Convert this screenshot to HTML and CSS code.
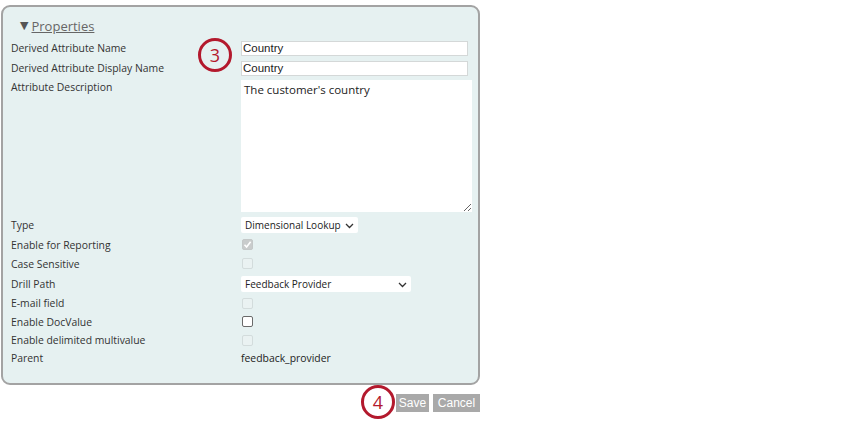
FILE: index.html
```html
<!DOCTYPE html>
<html>
<head>
<meta charset="utf-8">
<link rel="stylesheet" href="styles.css">
</head>
<body>
<div class="page">
  <div class="panel">
    <div class="header"><span class="tri">&#9660;</span><span class="title">Properties</span></div>
    <div class="row r20"><div class="label">Derived Attribute Name</div><div class="val"><input class="text" type="text" value="Country"></div></div>
    <div class="row r20"><div class="label">Derived Attribute Display Name</div><div class="val"><input class="text" type="text" value="Country"></div></div>
    <div class="row rdesc"><div class="label">Attribute Description</div><div class="val"><textarea class="desc">The customer's country</textarea></div></div>
    <div class="row rtype"><div class="label">Type</div><div class="val"><div class="sel sel-type"><span>Dimensional Lookup</span><svg class="chev" width="9" height="6" viewBox="0 0 9 6"><path d="M1 1 L4.5 4.5 L8 1" fill="none" stroke="#333" stroke-width="1.3"/></svg></div></div></div>
    <div class="row rcb1"><div class="label">Enable for Reporting</div><div class="val"><span class="cb dis checked"><svg width="9" height="9" viewBox="0 0 9 9"><path d="M1.5 4.8 L3.6 7 L7.6 1.8" fill="none" stroke="#fff" stroke-width="1.6"/></svg></span></div></div>
    <div class="row rcb2"><div class="label">Case Sensitive</div><div class="val"><span class="cb dis"></span></div></div>
    <div class="row rdrill"><div class="label">Drill Path</div><div class="val"><div class="sel sel-drill"><span>Feedback Provider</span><svg class="chev" width="9" height="6" viewBox="0 0 9 6"><path d="M1 1 L4.5 4.5 L8 1" fill="none" stroke="#333" stroke-width="1.3"/></svg></div></div></div>
    <div class="row rcb3"><div class="label">E-mail field</div><div class="val"><span class="cb dis"></span></div></div>
    <div class="row rcb4"><div class="label">Enable DocValue</div><div class="val"><span class="cb en"></span></div></div>
    <div class="row rcb5"><div class="label">Enable delimited multivalue</div><div class="val"><span class="cb dis"></span></div></div>
    <div class="row rparent"><div class="label">Parent</div><div class="val"><span class="plain">feedback_provider</span></div></div>
  </div>
  <div class="buttons">
    <span class="btn btn-save">Save</span>
    <span class="btn btn-cancel">Cancel</span>
  </div>
  <div class="marker m3">3</div>
  <div class="marker m4">4</div>
</div>
</body>
</html>
```
FILE: styles.css
```css
html, body {
  margin: 0;
  padding: 0;
  background: #ffffff;
}
body {
  font-family: "Open Sans", "DejaVu Sans", sans-serif;
  color: #333;
}
.page {
  position: relative;
  width: 850px;
  height: 425px;
  padding-top: 5px;
  padding-left: 1px;
  box-sizing: border-box;
}
.panel {
  width: 479px;
  height: 380px;
  box-sizing: border-box;
  border: 2px solid #a3a3a3;
  border-radius: 9px;
  background: #e6f1f1;
  padding: 8px 0 0 8px;
}
.header {
  height: 21px;
  display: flex;
  align-items: center;
  padding-left: 9px;
  color: #666;
}
.tri {
  font-size: 11px;
  margin-right: 3px;
  color: #555;
  font-family: "DejaVu Sans", sans-serif;
}
.title {
  font-size: 13px;
  text-decoration: underline;
  color: #666;
}
.row {
  display: flex;
  align-items: center;
  font-size: 10.4px;
}
.label {
  width: 230px;
  flex: none;
  color: #333;
}
.val {
  display: flex;
  align-items: center;
}
.r20 { height: 20px; }
.header + .row { margin-top: 2px; }
.rdesc { height: 136px; align-items: flex-start; padding-top: 2px; box-sizing: border-box; }
.rtype { height: 21px; }
.rcb1 { height: 19px; }
.rcb2 { height: 19px; }
.rdrill { height: 21px; }
.rcb3 { height: 18px; }
.rcb4 { height: 19px; }
.rcb5 { height: 18px; }
.rparent { height: 18px; }

.text {
  width: 227px;
  height: 15px;
  box-sizing: border-box;
  border: 1px solid #d4d8d8;
  background: #fff;
  font-family: "Liberation Sans", Arial, sans-serif;
  font-size: 11.5px;
  font-weight: normal;
  padding: 0 1px;
  color: #222;
  outline: none;
  margin: 0;
}
.desc {
  width: 231px;
  height: 132px;
  box-sizing: border-box;
  border: none;
  background: #fff;
  font-family: "Open Sans", sans-serif;
  font-size: 11.5px;
  color: #222;
  padding: 2px 3px;
  margin: 0;
  resize: both;
  outline: none;
}
.sel {
  position: relative;
  display: flex;
  align-items: center;
  height: 16px;
  background: #fff;
  border-radius: 2px;
  box-sizing: border-box;
  padding-left: 4px;
  font-size: 10px;
  color: #222;
}
.sel-type { width: 117px; }
.sel-drill { width: 170px; }
.chev {
  position: absolute;
  right: 4px;
  top: 6px;
}
.cb {
  display: inline-block;
  width: 11px;
  height: 11px;
  box-sizing: border-box;
  border-radius: 2px;
  margin-left: 1px;
  position: relative;
}
.cb.dis {
  border: 1px solid #d3dcdc;
  background: #eaf2f2;
}
.cb.checked {
  background: #c9cccc;
  border-color: #c4c8c8;
}
.cb.checked svg {
  position: absolute;
  left: 0;
  top: 0;
}
.cb.en {
  border: 1px solid #6a6a6a;
  background: #fff;
}
.plain {
  margin-left: 0;
  color: #222;
}
.buttons {
  width: 479px;
  display: flex;
  justify-content: flex-end;
  gap: 4px;
  margin-top: 9px;
}
.btn {
  display: inline-flex;
  align-items: center;
  justify-content: center;
  height: 18px;
  background: #a9a9a9;
  color: #fff;
  font-family: "Liberation Sans", Arial, sans-serif;
  font-size: 12px;
}
.btn-save { width: 33px; }
.btn-cancel { width: 47px; }
.marker {
  position: absolute;
  width: 34px;
  height: 34px;
  box-sizing: border-box;
  border: 3px solid #b3192d;
  border-radius: 50%;
  display: flex;
  align-items: center;
  justify-content: center;
  font-family: "Open Sans", sans-serif;
  font-size: 18px;
  color: #b3192d;
  line-height: 1;
}
.m3 { left: 198px; top: 38px; }
.m4 { left: 361px; top: 385px; background: #fff; }
```
